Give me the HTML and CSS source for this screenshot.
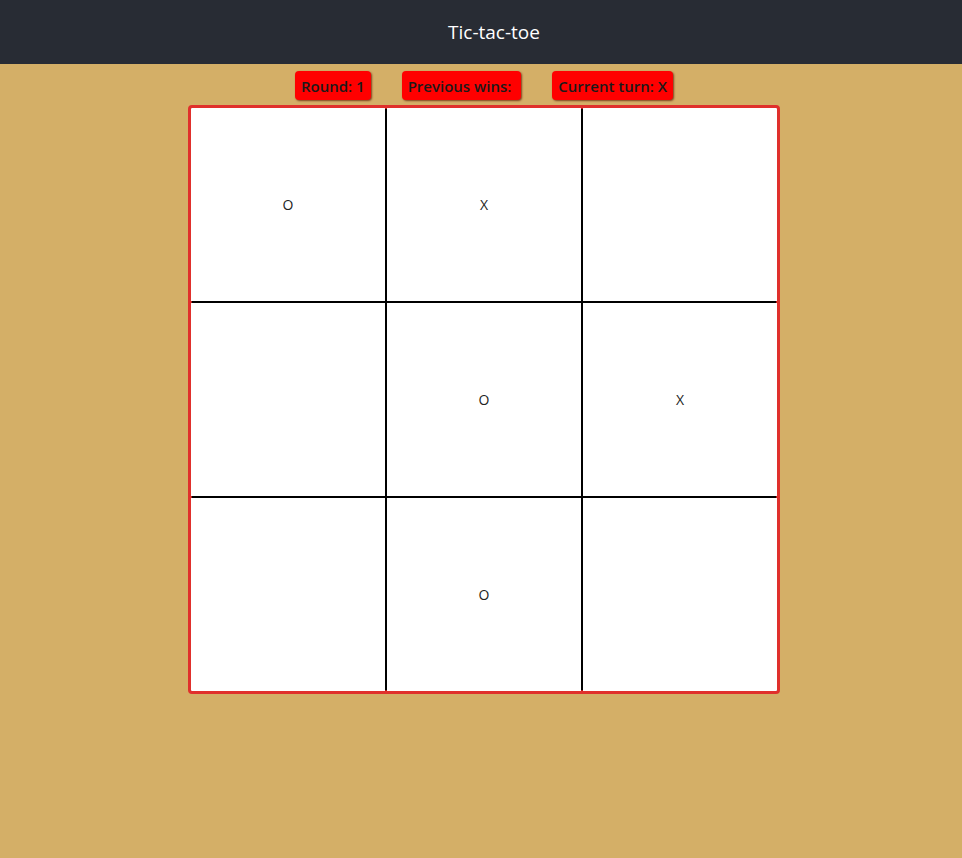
FILE: index.html
```html
<!DOCTYPE html>
<html>
<head>
<meta charset="utf-8">
<link rel="stylesheet" href="styles.css">
</head>
<body>
<header class="app-header">Tic-tac-toe</header>
<main class="game">
  <div class="status-bar">
    <div class="badge">Round: 1</div>
    <div class="badge">Previous wins:&nbsp;</div>
    <div class="badge">Current turn: X</div>
  </div>
  <div class="board">
    <div class="cell">O</div>
    <div class="cell">X</div>
    <div class="cell"></div>
    <div class="cell"></div>
    <div class="cell">O</div>
    <div class="cell">X</div>
    <div class="cell"></div>
    <div class="cell">O</div>
    <div class="cell"></div>
  </div>
</main>
</body>
</html>
```
FILE: styles.css
```css
html, body {
  margin: 0;
  padding: 0;
  height: 100%;
}
body {
  background: #d4af67;
  font-family: "Open Sans", "Noto Sans", sans-serif;
}
.app-header {
  height: 64px;
  background: #282c34;
  color: #ffffff;
  font-size: 19px;
  display: flex;
  align-items: center;
  justify-content: center;
  padding-left: 26px;
  box-sizing: border-box;
}
.game {
  display: flex;
  flex-direction: column;
  align-items: center;
  padding-left: 6px;
}
.status-bar {
  display: flex;
  gap: 31px;
  margin-top: 7px;
}
.badge {
  background: #ff0000;
  color: #1a1a1a;
  font-weight: 600;
  font-size: 15px;
  height: 29px;
  box-sizing: border-box;
  padding: 0 6px;
  display: flex;
  align-items: center;
  border-radius: 4px;
  box-shadow: 1px 1px 2px rgba(90, 20, 0, 0.7);
}
.board {
  margin-top: 5px;
  border: 3px solid #e0302c;
  border-radius: 4px;
  display: grid;
  grid-template-columns: repeat(3, 194px);
  grid-template-rows: repeat(3, 193px);
  gap: 2px;
  background: #000000;
  overflow: hidden;
  box-shadow: inset 0 0 0 1px #b01818;
}
.cell {
  background: #ffffff;
  display: flex;
  align-items: center;
  justify-content: center;
  font-size: 14px;
  color: #222222;
}
```
